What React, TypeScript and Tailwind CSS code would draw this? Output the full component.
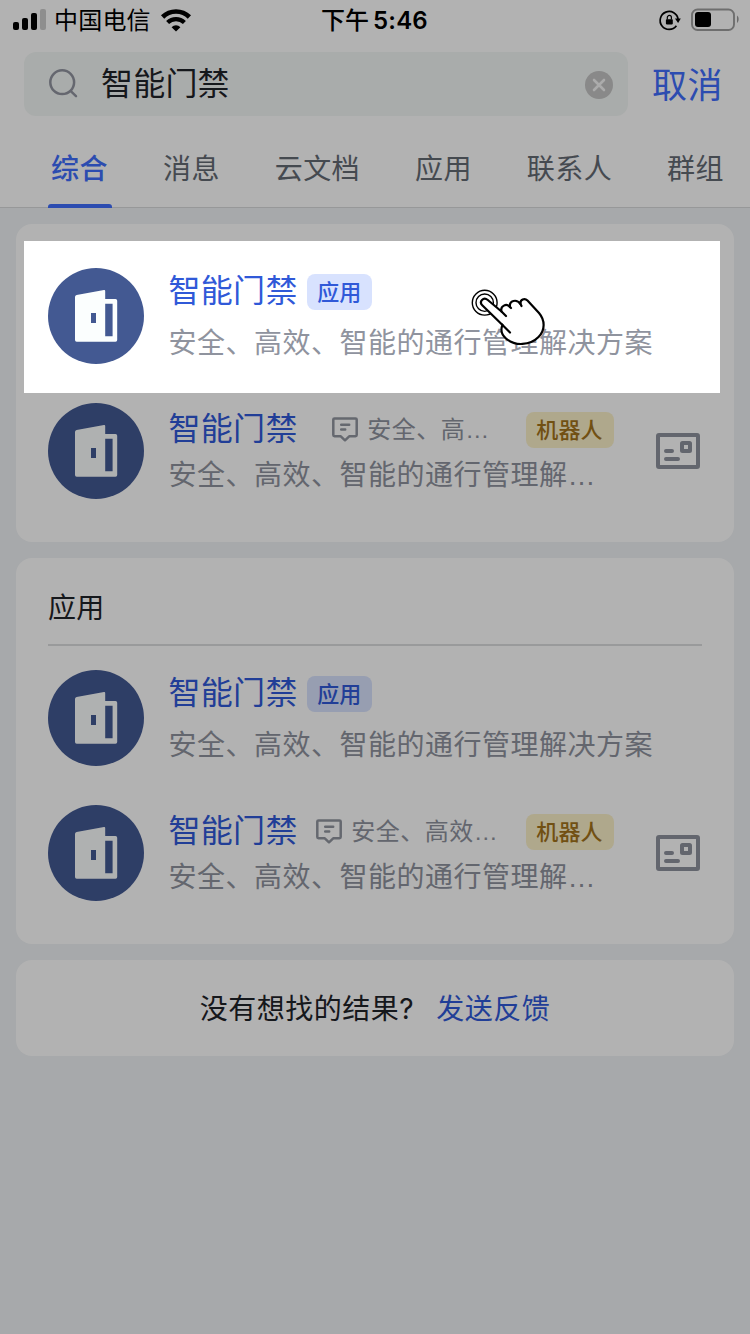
import type { ReactNode } from "react";

const FONT = "font-['Inter','Noto_Sans_CJK_SC',sans-serif]";

function StatusBar() {
  return (
    <div className="flex h-10 items-center text-black">
      <svg className="ml-3 h-6 w-[35px] shrink-0" viewBox="0 0 35 24">
        <rect x="1" y="14" width="6" height="8" rx="2" />
        <rect x="10" y="10" width="6" height="12" rx="2" />
        <rect x="19" y="5" width="6" height="17" rx="2" />
        <rect x="28" y="1" width="6" height="21" rx="2" opacity="0.2" />
      </svg>
      <span className="mt-0.5 ml-[7px] w-[98px] text-[24px] leading-10 tracking-[0.2px] whitespace-nowrap">中国电信</span>
      <svg className="mt-px ml-2 h-6 w-8 shrink-0" viewBox="0 0 32 24">
        <path d="M2.600 8a19 19 0 0 1 26.800 0" fill="none" stroke="#000" strokeWidth="4.600" />
        <path d="M7.600 13.600a12 12 0 0 1 16.800 0" fill="none" stroke="#000" strokeWidth="4.200" />
        <path d="M16 22.600l-4.400-4.400a6.200 6.200 0 0 1 8.800 0z" />
      </svg>
      <span className="mt-0.5 ml-[129px] text-[24px] leading-10 font-medium whitespace-nowrap">
        下午<span className="ml-1 tracking-[0.2px] font-semibold">5:46</span>
      </span>
      <div className="flex-1" />
      <svg className="mr-[9px] h-6 w-6 shrink-0" viewBox="0 0 24 24">
        <path d="M19.400 17.800A9 9 0 1 1 21.100 11.500" fill="none" stroke="#000" strokeWidth="1.700" />
        <path d="M18 10.600h5.800l-2.700 4.300z" />
        <rect x="8.900" y="11.200" width="6.900" height="5.200" rx="0.800" />
        <path d="M10.300 11.500V9.500a2.050 2.050 0 0 1 4.100 0v2" fill="none" stroke="#000" strokeWidth="1.200" />
      </svg>
      <svg className="mr-2.5 h-6 w-[50px] shrink-0" viewBox="0 0 50 24">
        <rect x="2" y="1.500" width="42" height="20.500" rx="5.500" fill="none" stroke="#000" strokeOpacity="0.38" strokeWidth="1.900" />
        <rect x="5" y="4" width="16" height="15" rx="3" />
        <path d="M47 7.500c2.200 1.400 2.200 6 0 7.400z" opacity="0.4" />
      </svg>
    </div>
  );
}

function SearchBar() {
  return (
    <div className="mt-3 ml-6 flex h-16 items-center">
      <div className="flex h-16 w-[604px] items-center rounded-xl bg-[#f3f7f5]">
        <svg className="ml-6 h-8 w-8 shrink-0" viewBox="0 0 32 32" fill="none" stroke="#9194a0" strokeWidth="2.5" strokeLinecap="round">
          <circle cx="14.2" cy="14.2" r="11.9" />
          <path d="M22.8 23.2l5.2 5" />
        </svg>
        <span className="ml-[21px] flex-1 text-[32px] leading-[64px] tracking-[0.2px] text-[#1f2329]">智能门禁</span>
        <svg className="mt-0.5 mr-[15px] h-7 w-7 shrink-0" viewBox="0 0 28 28">
          <circle cx="14" cy="14" r="14" fill="#c4c4c4" />
          <path d="M9 9l10 10M19 9L9 19" stroke="#f5f5f5" strokeWidth="2.600" strokeLinecap="round" />
        </svg>
      </div>
      <span className="mt-0.5 ml-6 text-[35px] leading-[64px] tracking-[0.600px] text-[#3f6dfc]">取消</span>
    </div>
  );
}

const TABS = ["综合", "消息", "云文档", "应用", "联系人", "群组"];

function Tabs() {
  return (
    <div className="flex h-[92px] gap-[55px] border-b border-[#d9dadb] pl-[51px]">
      {TABS.map((tab, i) =>
        i === 0 ? (
          <div key={tab} className="flex h-[92px] w-[57px] flex-col items-center justify-between text-[#3f6dfc]">
            <span className="mt-[33px] text-[28px] leading-10 tracking-[0.400px] font-medium">{tab}</span>
            <span className="ml-px h-1 w-16 shrink-0 rounded-t-[3px] bg-[#3f6dfc]" />
          </div>
        ) : (
          <span key={tab} className="mt-[33px] shrink-0 text-[28px] leading-10 tracking-[0.400px] text-[#646a73]">
            {tab}
          </span>
        ),
      )}
    </div>
  );
}

function DoorAvatar() {
  return (
    <svg className="h-24 w-24 shrink-0" viewBox="0 0 96 96">
      <circle cx="48" cy="48" r="48" fill="#435992" />
      <path
        fillRule="evenodd"
        fill="#fbfefe"
        d="M28.6 27L56 22q1.2-.2 1.2 1V31H67.5q1.7 0 1.7 1.7V72q0 1.7-1.7 1.7H28.7q-1.7 0-1.7-1.7V29q0-1.7 1.6-2zM57.2 35.700V68.300H64.600V35.700zM43 45v10h5V45z"
      />
    </svg>
  );
}

function Title() {
  return <span className="text-[32px] leading-[46px] tracking-[0.3px] whitespace-nowrap text-[#3059d8]">智能门禁</span>;
}

function AppRow() {
  return (
    <div className="flex h-24">
      <DoorAvatar />
      <div className="ml-[24.500px]">
        <div className="flex h-[46px] items-center">
          <Title />
          <span className="mt-0.5 ml-[9px] flex h-9 w-[65px] items-center justify-center rounded-lg bg-[#d8e2fe] text-[22px] leading-9 font-medium text-[#3059d8]">
            应用
          </span>
        </div>
        <p className="mt-[9px] text-[28px] leading-10 tracking-[0.5px] whitespace-nowrap text-[#8f939e]">
          安全、高效、智能的通行管理解决方案
        </p>
      </div>
    </div>
  );
}

function BotRow({ note, gap }: { note: string; gap: string }) {
  return (
    <div className="flex h-24 items-center">
      <DoorAvatar />
      <div className="ml-[24.500px] h-24 w-[445.500px]">
        <div className="mt-[3px] flex h-[46px] items-center">
          <Title />
          <svg className={`${gap} mt-0.5 h-7 w-7 shrink-0`} viewBox="0 0 28 28" fill="none" stroke="#9196a0" strokeWidth="2.500" strokeLinejoin="round" strokeLinecap="round">
            <path d="M3.500 2.400h21q1.200 0 1.200 1.200v15.500q0 1.200-1.200 1.200H18.200l-4.200 4-4.200-4H3.500q-1.200 0-1.200-1.200V3.600q0-1.200 1.200-1.200z" />
            <path d="M10.200 8.700h8M10.200 13.400h4" />
          </svg>
          <span className="mt-0.5 ml-2 flex-1 text-[24px] leading-9 tracking-[0.5px] whitespace-nowrap text-[#8f939e]">
            {note}
            <Dots />
          </span>
          <span className="mt-0.5 flex h-9 w-22 shrink-0 items-center justify-center rounded-lg bg-[#fbf1c9] pr-px text-[22px] leading-9 tracking-[0.200px] font-medium text-[#a3731b]">
            机器人
          </span>
        </div>
        <p className="mt-[3px] text-[28px] leading-10 tracking-[0.5px] whitespace-nowrap text-[#8f939e]">
          安全、高效、智能的通行管理解
          <Dots />
        </p>
      </div>
      <svg className="ml-[41px] h-[38px] w-[46px] shrink-0" viewBox="0 0 46 38" fill="none" stroke="#8f939e" strokeWidth="4" strokeLinecap="round" strokeLinejoin="round">
        <rect x="3" y="3" width="40" height="32" rx="1" />
        <rect x="27" y="11" width="8" height="8" rx="0.500" />
        <path d="M11 19h6M11 27h12" />
      </svg>
    </div>
  );
}

function Dots() {
  return <span className="font-['Liberation_Sans',sans-serif]">…</span>;
}

function Card({ className, children }: { className: string; children: ReactNode }) {
  return <section className={`mx-4 rounded-2xl bg-white ${className}`}>{children}</section>;
}

export default function App() {
  return (
    <main className={`relative h-[1334px] w-[750px] overflow-hidden bg-[#f0f3f5] ${FONT}`}>
      <header className="h-[208px] bg-white">
        <StatusBar />
        <SearchBar />
        <Tabs />
      </header>

      <Card className="mt-4 h-[318px] px-8 pt-11">
        <AppRow />
        <div className="mt-[39px]">
          <BotRow note="安全、高" gap="ml-[33.500px]" />
        </div>
      </Card>

      <Card className="mt-4 h-[386px] px-8 pt-[30px]">
        <h2 className="text-[28px] leading-10 tracking-[0.300px] text-[#1f2329]">应用</h2>
        <div className="mt-4 mb-6 h-0.5 bg-[#dcdddf]" />
        <AppRow />
        <div className="mt-[39px]">
          <BotRow note="安全、高效" gap="ml-[17.500px]" />
        </div>
      </Card>

      <Card className="mt-4 flex h-24 items-center justify-center pt-0.5 text-[28px] leading-10 tracking-[0.5px]">
        <span className="text-[#1f2329]">没有想找的结果?</span>
        <span className="ml-[22px] text-[#3059d8]">发送反馈</span>
      </Card>

      <div className="absolute top-[241px] left-6 h-[152px] w-[696px] shadow-[0_0_0_1400px_rgba(0,0,0,0.3)]" />
      <svg className="absolute top-[286px] left-[468px] h-[64px] w-[80px]" viewBox="0 0 80 64" fill="none" stroke="#000" strokeLinecap="round" strokeLinejoin="round">
        <circle cx="16.700" cy="16.700" r="12.400" strokeWidth="1.400" />
        <circle cx="16.700" cy="16.700" r="8.700" strokeWidth="1.400" />
        <path
          fill="#fff"
          strokeWidth="2.200"
          d="M34.500 39L14.500 19.500C10.500 15.500 15.500 10.500 19.800 14L33.500 25.500C32 20 38.500 16.800 42 21C41 14.500 48.500 12.500 52.500 18C52 13.500 56.500 11.500 59.500 14.500L71 27C77 34 77.500 44 70.500 51C62 59.500 47 60.500 38 52.500C33.500 48.500 32.500 43.500 34.500 39Z"
        />
        <path strokeWidth="2.200" d="M34 38.500L42 46.500M33.500 25.500L38 30M42 21L43 22M52.500 18L53.500 20" />
      </svg>
    </main>
  );
}
